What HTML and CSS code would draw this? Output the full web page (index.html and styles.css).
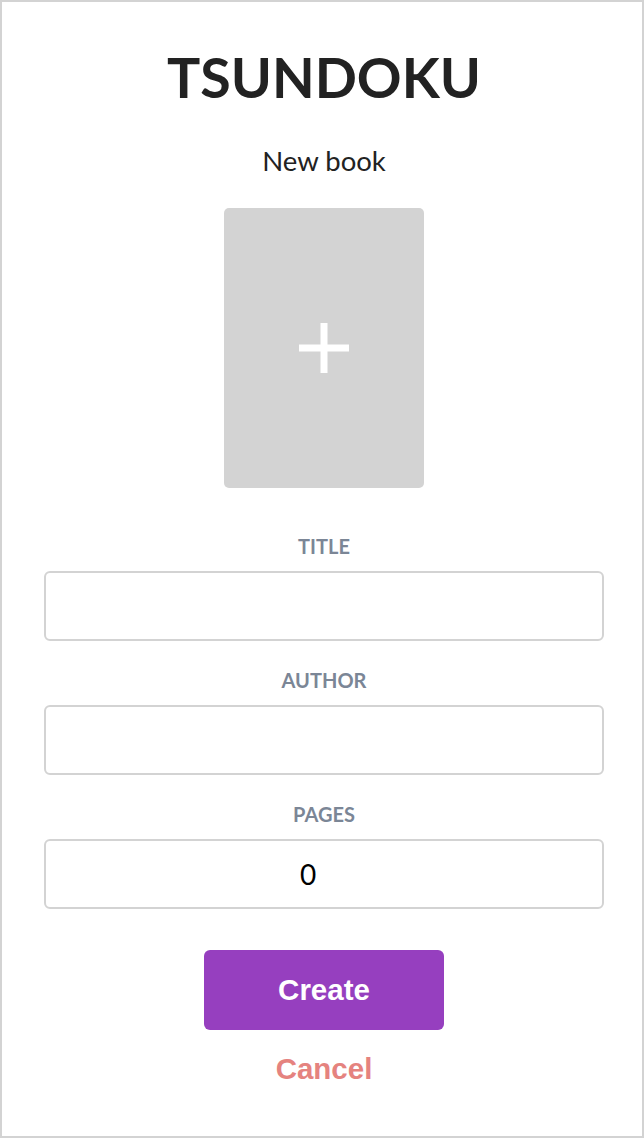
FILE: index.html
```html
<!DOCTYPE html>
<html lang="en">
<head>
<meta charset="utf-8">
<title>Tsundoku – New book</title>
<link rel="stylesheet" href="styles.css">
</head>
<body>
<div class="page">
  <h1 class="brand">TSUNDOKU</h1>
  <h2 class="subtitle">New book</h2>
  <button class="cover" type="button" aria-label="Add cover">
    <svg class="plus" width="50" height="50" viewBox="0 0 50 50" aria-hidden="true">
      <rect x="21.5" y="0" width="7" height="50" fill="#ffffff"/>
      <rect x="0" y="21.5" width="50" height="7" fill="#ffffff"/>
    </svg>
  </button>
  <form class="form">
    <label class="field">
      <span class="label">Title</span>
      <input class="input" type="text">
    </label>
    <label class="field">
      <span class="label">Author</span>
      <input class="input" type="text">
    </label>
    <label class="field">
      <span class="label">Pages</span>
      <input class="input input-number" type="text" value="0">
    </label>
    <button class="create" type="button">Create</button>
    <button class="cancel" type="button">Cancel</button>
  </form>
</div>
</body>
</html>
```

FILE: styles.css
```css
html, body {
  margin: 0;
  padding: 0;
  background: #ffffff;
}

.page {
  box-sizing: border-box;
  width: 644px;
  height: 1138px;
  border: 2px solid #d3d3d3;
  padding-left: 4px;
  display: flex;
  flex-direction: column;
  align-items: center;
  font-family: Lato, "Noto Sans", sans-serif;
  color: #222222;
}

.brand {
  margin: 42px 0 0;
  font-family: Lato, sans-serif;
  font-weight: 700;
  font-size: 55.5px;
  line-height: 1.2;
  color: #222222;
}

.subtitle {
  margin: 33px 0 0;
  font-family: Lato, sans-serif;
  font-weight: 400;
  font-size: 27.5px;
  line-height: 1.2;
  color: #222222;
}

.cover {
  margin-top: 31px;
  width: 200px;
  height: 280px;
  border: none;
  border-radius: 5px;
  background: #d3d3d3;
  padding: 0;
  display: flex;
  align-items: center;
  justify-content: center;
  cursor: pointer;
}

.plus {
  display: block;
}

.form {
  margin-top: 46px;
  width: 560px;
  display: flex;
  flex-direction: column;
  align-items: center;
}

.field {
  width: 100%;
  display: flex;
  flex-direction: column;
  align-items: center;
  margin-bottom: 27px;
}

.label {
  font-family: Lato, sans-serif;
  font-weight: 700;
  font-size: 20px;
  line-height: 1.2;
  text-transform: uppercase;
  color: #7b8696;
  margin-bottom: 13px;
}

.input {
  box-sizing: border-box;
  width: 100%;
  height: 70px;
  border: 2px solid #d3d3d3;
  border-radius: 6px;
  background: #ffffff;
  font-family: Lato, sans-serif;
  font-size: 28px;
  color: #000000;
  text-align: center;
  padding: 0 12px;
  outline: none;
}

.input-number {
  padding-right: 44px;
}

.create {
  margin-top: 14px;
  width: 240px;
  height: 80px;
  border: none;
  border-radius: 6px;
  background: #963fbf;
  color: #ffffff;
  font-family: "Liberation Sans", Arial, sans-serif;
  font-weight: 700;
  font-size: 29.5px;
  cursor: pointer;
}

.cancel {
  margin-top: 22px;
  border: none;
  background: none;
  padding: 0;
  color: #e5837f;
  font-family: "Liberation Sans", Arial, sans-serif;
  font-weight: 700;
  font-size: 29.5px;
  line-height: 1.15;
  cursor: pointer;
}
```
